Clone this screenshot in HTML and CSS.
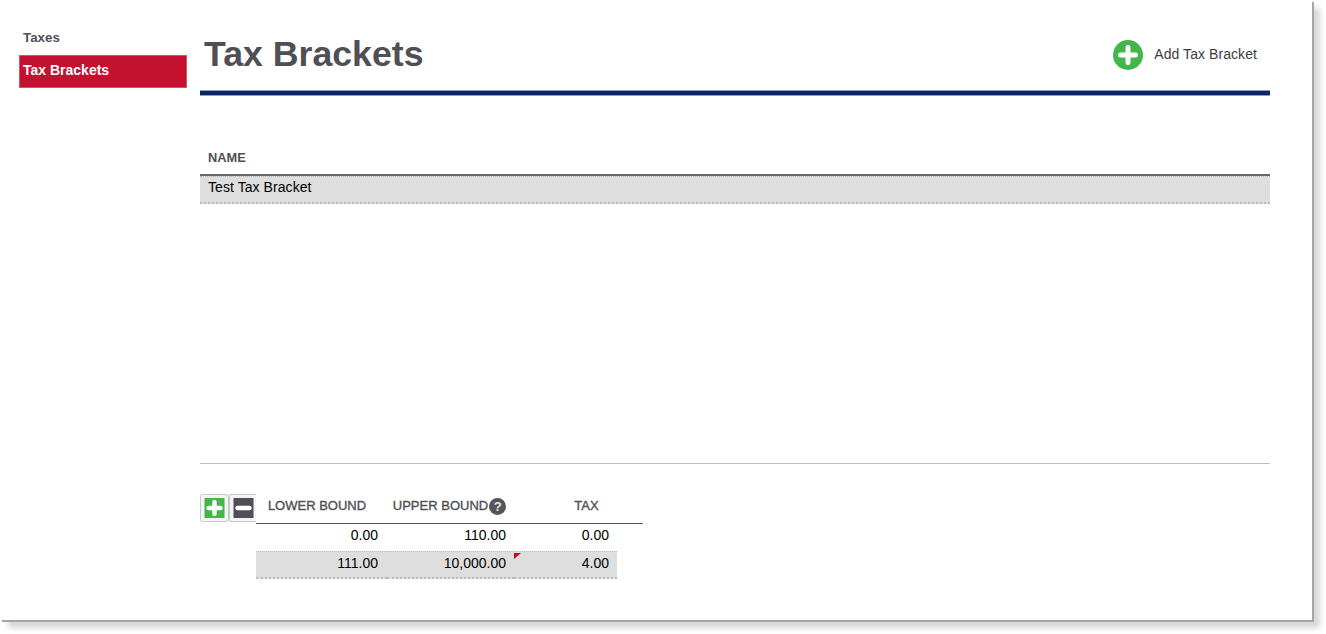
FILE: index.html
```html
<!DOCTYPE html>
<html lang="en">
<head>
<meta charset="utf-8">
<title>Tax Brackets</title>
<link rel="stylesheet" href="styles.css">
</head>
<body>
<div class="frame">
  <nav class="sidebar">
    <div class="nav-title">Taxes</div>
    <a class="nav-item">Tax Brackets</a>
  </nav>
  <main class="main">
    <header class="page-head">
      <h1>Tax Brackets</h1>
      <a class="add-link">
        <svg class="add-icon" viewBox="0 0 30 30" width="30" height="30" aria-hidden="true">
          <circle cx="15" cy="15" r="15" fill="#43b649"/>
          <path d="M15 7.5v15M7.5 15h15" stroke="#fff" stroke-width="5" stroke-linecap="round"/>
        </svg>
        <span class="add-text">Add Tax Bracket</span>
      </a>
    </header>
    <div class="rule"></div>
    <section class="list">
      <div class="list-head">NAME</div>
      <div class="list-row">Test Tax Bracket</div>
    </section>
    <hr class="divider">
    <section class="detail">
      <div class="tools">
        <button class="tool tool-add" aria-label="Add">
          <svg viewBox="0 0 20 20" width="21" height="20" aria-hidden="true"><rect width="20" height="20" fill="#43b649"/><path d="M10 4v12M4 10h12" stroke="#fff" stroke-width="4.4" stroke-linecap="round"/></svg>
        </button>
        <button class="tool tool-remove" aria-label="Remove">
          <svg viewBox="0 0 20 20" width="21" height="20" aria-hidden="true"><rect width="20" height="20" fill="#4f4f55"/><path d="M4 10h12" stroke="#fff" stroke-width="4.4" stroke-linecap="round"/></svg>
        </button>
      </div>
      <div class="grid">
        <div class="grid-head">
          <div class="col col-a hcell hcell-lower">LOWER BOUND</div>
          <div class="col col-b hcell hcell-upper">UPPER BOUND<span class="help">?</span></div>
          <div class="hcell hcell-tax">TAX</div>
        </div>
        <div class="grid-row">
          <div class="col col-a cell">0.00</div>
          <div class="col col-b cell">110.00</div>
          <div class="col col-c cell">0.00</div>
        </div>
        <div class="grid-row alt">
          <div class="col col-a cell">111.00</div>
          <div class="col col-b cell">10,000.00</div>
          <div class="col col-c cell flagged">4.00</div>
        </div>
      </div>
    </section>
  </main>
</div>
</body>
</html>
```
FILE: styles.css
```css
* { box-sizing: border-box; }
html, body { margin: 0; height: 100%; background: #fff; overflow: hidden; }
body { padding: 2px 0 0 2px; font-family: "Liberation Sans", Arial, sans-serif; color: #000; }

.frame {
  display: flex;
  width: 1312px;
  height: 620px;
  background: #fff;
  border-right: 2px solid #a5a5a5;
  border-bottom: 2px solid #a5a5a5;
  box-shadow: 6px 6px 6px rgba(0, 0, 0, .16);
}

.sidebar { width: 198px; padding: 27px 0 0 17px; flex: none; }
.nav-title { height: 26px; line-height: 18px; padding-left: 4px; font-size: 13.33px; font-weight: 700; color: #4f4f55; }
.nav-item {
  display: block;
  width: 168px;
  height: 33px;
  line-height: 29px;
  padding-left: 3px;
  font-size: 14px;
  font-weight: 700;
  color: #fff;
  background: #c3112f;
  border: 1px solid #d9516a;
}

.main { width: 1070px; flex: none; }
.page-head {
  display: flex;
  align-items: center;
  justify-content: space-between;
  height: 88px;
  padding: 8px 13px 0 4px;
}
.page-head h1 { margin: 7px 0 0; font-size: 35.7px; line-height: 40px; font-weight: 700; color: #4f4f55; }
.add-link { display: flex; align-items: center; gap: 11px; margin-top: 10px; font-size: 14px; color: #3c3c44; }
.add-icon { display: block; }
.add-text { padding-bottom: 2px; letter-spacing: .07px; }
.rule { height: 6px; background: #0a2668; border-top: 1px solid #8f9cbb; border-bottom: 1px solid #8f9cbb; }

.list { margin-top: 44px; }
.list-head { height: 36px; padding: 10px 8px 0; line-height: 16px; font-size: 12.8px; font-weight: 700; color: #4f4f55; border-bottom: 2px solid #66666a; }
.list-row { height: 28px; padding-left: 8px; line-height: 20px; font-size: 14px; letter-spacing: .07px; background: #dedede; border-top: 1px dotted #bbb; border-bottom: 2px dotted #bbb; }

.divider { margin: 259px 0 0; height: 1px; border: 0; background: #bdbdbd; }

.detail { display: flex; margin-top: 30px; }
.tools { display: flex; flex: none; height: 28px; }
.tool { display: flex; align-items: center; justify-content: center; padding: 0; height: 28px; background: #f4f4f4; border: 1px solid #c9c9c9; border-radius: 3px; }
.tool-add { width: 29px; }
.tool-remove { width: 27px; border-right: 0; border-radius: 3px 0 0 3px; }
.tool svg { display: block; }

.grid { width: 387px; flex: none; font-size: 14px; }
.grid-head { display: flex; height: 30px; width: 387px; border-bottom: 1px solid #55555a; }
.hcell { font-size: 13px; line-height: 23px; color: #4f4f55; -webkit-text-stroke: .35px #4f4f55; text-align: center; }
.hcell-lower { padding-right: 9px; }
.hcell-upper { padding-right: 2px; }
.hcell-tax { width: 129px; padding-left: 16px; }
.col-a { width: 131px; }
.col-b { width: 127px; }
.col-c { width: 103px; }
.help {
  display: inline-block;
  width: 17px;
  height: 17px;
  margin-left: 1px;
  border-radius: 50%;
  background: #55555a;
  color: #e6e6e6;
  font-size: 13px;
  font-weight: 700;
  line-height: 17px;
  text-align: center;
  vertical-align: -1px;
  -webkit-text-stroke: 0;
}
.grid-row { display: flex; height: 27px; width: 361px; }
.cell { padding: 2px 8px 0 0; line-height: 18px; text-align: right; position: relative; }
.cell.col-a { padding-right: 9px; }
.alt { height: 28px; background: #dedede; }
.alt .cell { border-top: 1px dotted #bbb; border-bottom: 2px dotted #bbb; padding-top: 2px; }
.flagged::before {
  content: "";
  position: absolute;
  left: 0;
  top: 1px;
  border-top: 6px solid #c8001e;
  border-right: 7px solid transparent;
}
```
